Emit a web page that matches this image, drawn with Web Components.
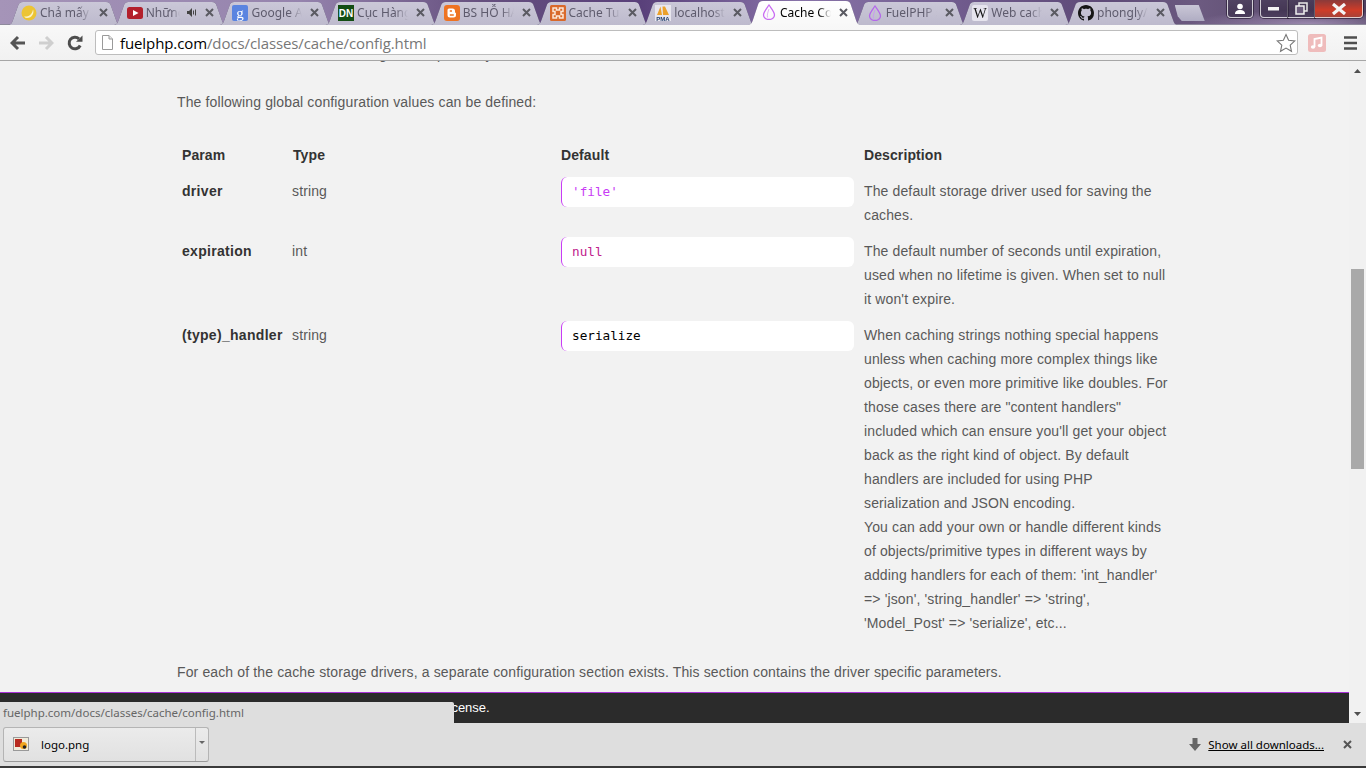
<!DOCTYPE html>
<html>
<head>
<meta charset="utf-8">
<title>Cache Config</title>
<style>
html,body{margin:0;padding:0;height:768px;overflow:hidden;background:#f2f2f2;}
body{display:flex;flex-direction:column;font-family:"Liberation Sans",Arial,sans-serif;}
svg{display:block;}
</style>
</head>
<body>

<chrome-tabstrip>
  <chrome-tab label="Chả mấy cái">
    <svg slot="icon" width="16" height="16" viewBox="0 0 16 16"><circle cx="8" cy="8" r="7.5" fill="#ecc435"/><path d="M3 11.5C7 12 11 10 12 4.500C13.500 8 11 13 6 13C5 13 4 12.500 3 11.500Z" fill="#fbf3c8"/></svg>
  </chrome-tab>
  <chrome-tab label="Những điều" audio>
    <svg slot="icon" width="16" height="16" viewBox="0 0 16 16"><rect y="2" width="16" height="12" rx="2.500" fill="#b3202c"/><path d="M6 5L11.500 8L6 11Z" fill="#fff"/></svg>
  </chrome-tab>
  <chrome-tab label="Google Analytics">
    <svg slot="icon" width="16" height="16" viewBox="0 0 16 16"><rect width="16" height="16" rx="2" fill="#5a84e0"/><text x="8" y="12.500" text-anchor="middle" font-family="Liberation Serif" font-size="15" fill="#fff">g</text></svg>
  </chrome-tab>
  <chrome-tab label="Cục Hàng hải">
    <svg slot="icon" width="16" height="16" viewBox="0 0 16 16"><rect width="16" height="16" fill="#134d13"/><text x="8" y="12" text-anchor="middle" font-family="Liberation Sans" font-weight="700" font-size="10" fill="#fff">DN</text></svg>
  </chrome-tab>
  <chrome-tab label="BS HỖ HẢI">
    <svg slot="icon" width="16" height="16" viewBox="0 0 16 16"><rect width="16" height="16" rx="3" fill="#ee7322"/><path d="M5 3.500H8.500A2.500 2.500 0 0 1 11 6V7A1 1 0 0 0 12 8V10A2.500 2.500 0 0 1 9.500 12.500H6A2.500 2.500 0 0 1 3.500 10V5A1.500 1.500 0 0 1 5 3.500Z" fill="#fff"/><path d="M5.800 6H8M5.800 10H9.800" stroke="#ee7322" stroke-width="1.300"/></svg>
  </chrome-tab>
  <chrome-tab label="Cache Tutorial">
    <svg slot="icon" width="16" height="16" viewBox="0 0 16 16"><rect width="16" height="16" rx="1.500" fill="#d9692b"/><path d="M3 3H6.500V5H9.500V3H13V6.500H11V9.500H13V13H9.500V11H6.500V13H3V9.500H5V6.500H3Z" fill="none" stroke="#fbe7d8" stroke-width="1.500"/></svg>
  </chrome-tab>
  <chrome-tab label="localhost:8080">
    <svg slot="icon" width="16" height="16" viewBox="0 0 16 16"><rect width="16" height="16" fill="#e8e6ee"/><path d="M2 10L5.500 1.500L7 10ZM8 10L7.500 1.500L10 1.500L14 10Z" fill="#eba12c"/><text x="8" y="15.500" text-anchor="middle" font-family="Liberation Sans" font-weight="700" font-size="6" fill="#24406f">PMA</text></svg>
  </chrome-tab>
  <chrome-tab label="Cache Config" active>
    <svg slot="icon" width="14" height="16" viewBox="0 0 14 16"><path d="M7 1C9 4 12.500 8 12.500 11A5.500 4.500 0 0 1 1.500 11C1.500 8 5 4 7 1Z" fill="none" stroke="#c96cf2" stroke-width="1.300"/><path d="M7 5C6 8 5 10 5.500 13.500" fill="none" stroke="#e3b3f8"/></svg>
  </chrome-tab>
  <chrome-tab label="FuelPHP » Docs">
    <svg slot="icon" width="14" height="16" viewBox="0 0 14 16"><path d="M7 1C9 4 12.500 8 12.500 11A5.500 4.500 0 0 1 1.500 11C1.500 8 5 4 7 1Z" fill="none" stroke="#b468ea" stroke-width="1.300"/><path d="M7 5C6 8 5 10 5.500 13.500" fill="none" stroke="#c99cef"/></svg>
  </chrome-tab>
  <chrome-tab label="Web cache - Wiki">
    <svg slot="icon" width="16" height="16" viewBox="0 0 16 16"><rect width="16" height="16" rx="2" fill="#e6e4ee"/><text x="8" y="13" text-anchor="middle" font-family="Liberation Serif" font-size="14" fill="#111">W</text></svg>
  </chrome-tab>
  <chrome-tab label="phongly/fuel">
    <svg slot="icon" width="16" height="16" viewBox="0 0 16 16"><path fill="#161616" d="M8 0C3.580 0 0 3.580 0 8c0 3.540 2.290 6.530 5.470 7.590.4.070.55-.17.55-.38 0-.19-.01-.82-.01-1.490-2.010.37-2.530-.49-2.690-.94-.09-.23-.48-.94-.82-1.130-.28-.15-.68-.52-.01-.53.630-.01 1.080.58 1.230.82.720 1.210 1.870.87 2.330.66.070-.52.280-.87.510-1.070-1.780-.2-3.640-.89-3.640-3.950 0-.87.310-1.590.82-2.150-.08-.2-.36-1.020.08-2.120 0 0 .67-.21 2.200.82.640-.18 1.320-.27 2-.27s1.360.09 2 .27c1.530-1.040 2.200-.82 2.200-.82.440 1.100.16 1.920.08 2.120.51.560.82 1.270.82 2.150 0 3.070-1.870 3.750-3.650 3.950.29.250.54.730.54 1.480 0 1.070-.01 1.930-.01 2.200 0 .21.150.46.550.38A8.010 8.010 0 0 0 16 8c0-4.420-3.580-8-8-8z"/></svg>
  </chrome-tab>
</chrome-tabstrip>

<chrome-toolbar url-host="fuelphp.com" url-path="/docs/classes/cache/config.html"></chrome-toolbar>

<main-area>
  <docs-page>
    <p class="cut">The class loads its defaults using the simple array.</p>
    <p>The following global configuration values can be defined:</p>
    <param-table>
      <param-row head>
        <span slot="name">Param</span><span slot="type">Type</span><span slot="def">Default</span><span slot="desc">Description</span>
      </param-row>
      <param-row>
        <span slot="name">driver</span><span slot="type">string</span>
        <code-box slot="def" style="--code:#c83cf5">'file'</code-box>
        <span slot="desc">The default storage driver used for saving the caches.</span>
      </param-row>
      <param-row>
        <span slot="name">expiration</span><span slot="type">int</span>
        <code-box slot="def" style="--code:#c0218c">null</code-box>
        <span slot="desc">The default number of seconds until expiration, used when no lifetime is given. When set to null it won't expire.</span>
      </param-row>
      <param-row>
        <span slot="name">(type)_handler</span><span slot="type">string</span>
        <code-box slot="def" style="--code:#000">serialize</code-box>
        <span slot="desc">When caching strings nothing special happens unless when caching more complex things like objects, or even more primitive like doubles. For those cases there are "content handlers" included which can ensure you'll get your object back as the right kind of object. By default handlers are included for using PHP serialization and JSON encoding.<br>You can add your own or handle different kinds of objects/primitive types in different ways by adding handlers for each of them: 'int_handler' =&gt; 'json', 'string_handler' =&gt; 'string', 'Model_Post' =&gt; 'serialize', etc...</span>
      </param-row>
    </param-table>
    <p class="after">For each of the cache storage drivers, a separate configuration section exists. This section contains the driver specific parameters.</p>
  </docs-page>
  <page-scrollbar></page-scrollbar>
  <page-footer>© FuelPHP Development Team 2010 - FuelPHP is released under the MIT license.</page-footer>
  <status-bubble>fuelphp.com/docs/classes/cache/config.html</status-bubble>
</main-area>

<download-bar file="logo.png"></download-bar>

<script>
//tab strip with the window buttons on the right
class ChromeTabstrip extends HTMLElement{
  constructor(){
    super();
    this.attachShadow({mode:'open'}).innerHTML = `
    <style>
      :host{
        display:flex;
        flex:none;
        height:25px;
        padding-left:7px;
        box-sizing:border-box;
        overflow:hidden;
        background:
          linear-gradient(transparent 24px,#8e8a9c 24px),
          radial-gradient(ellipse 120px 14px at 1310px 24px, rgba(190,170,210,.65), transparent),
          linear-gradient(90deg,#a594b8 0,#9583ad 300px,#66507f 480px,#59407a 640px,#8873a8 800px,#6a5586 1000px,#5e4a78 1100px,#6c5a80 1200px,#4f4060 1366px);
      }
      .tabs{display:flex;align-items:flex-end;height:25px;}
      .newtab{flex:none;width:30px;height:16px;margin:5px 0 0 5px;background:linear-gradient(#c9c6d6,#b0adc3);clip-path:polygon(0 0,24px 0,30px 100%,7px 100%,3px 70%);}
      .ctl{position:relative;display:flex;height:18px;margin-left:auto;margin-right:3px;flex:none;gap:7px;}
      .btn{box-sizing:border-box;height:18px;border:1px solid rgba(255,255,255,.75);border-top:0;border-radius:0 0 4px 4px;display:flex;align-items:center;justify-content:center;background:linear-gradient(rgba(60,50,75,.5),rgba(40,30,55,.55));box-shadow:0 0 0 1px rgba(30,20,40,.6);}
      .wbtns{display:flex;}
      .wbtns .btn{border-radius:0;border-left:0;}
      .wbtns .btn:first-child{border-left:1px solid rgba(255,255,255,.75);border-radius:0 0 0 4px;}
      .wbtns .btn:last-child{border-radius:0 0 4px 0;background:linear-gradient(#8a3a3a,#cf3c28 60%,#a84238);}
    </style>
    <div class="tabs"><slot></slot></div>
    <div class="newtab"></div>
    <div class="ctl">
      <div class="btn" style="width:26px">
        <svg width="12" height="12" viewBox="0 0 12 12"><circle cx="6" cy="3.500" r="2.800" fill="#fff"/><path d="M1 11C1 8 3 7 6 7S11 8 11 11Z" fill="#fff"/></svg>
      </div>
      <div class="wbtns">
        <div class="btn" style="width:28px"><svg width="12" height="5" viewBox="0 0 12 5"><rect y="1" width="11" height="3.500" fill="#f4f4f4"/></svg></div>
        <div class="btn" style="width:27px"><svg width="13" height="13" viewBox="0 0 13 13"><rect x="4" y="1" width="8" height="8" fill="none" stroke="#e8e8e8" stroke-width="1.500"/><rect x="1" y="4" width="8" height="8" fill="#6b5b7c" stroke="#f0f0f0" stroke-width="1.500"/></svg></div>
        <div class="btn" style="width:48px"><svg width="16" height="12" viewBox="0 0 16 12"><path d="M2 1L14 11M14 1L2 11" stroke="#f4f4f4" stroke-width="3.200"/></svg></div>
      </div>
    </div>`;
  }
}

//one tab, slanted by clip-path, outline comes from the host filter
class ChromeTab extends HTMLElement{
  constructor(){
    super();
    this.attachShadow({mode:'open'}).innerHTML = `
    <style>
      :host{
        display:block;
        flex:none;
        width:115px;
        height:24px;
        margin-right:-9.3px;
        filter:drop-shadow(0 0 .6px rgba(50,40,70,.8));
      }
      :host([active]){position:relative;z-index:2;height:25px;filter:drop-shadow(0 0 .5px rgba(50,40,70,.5));}
      .shape{
        box-sizing:border-box;
        height:100%;
        display:flex;
        align-items:center;
        padding:0 14px 1px 14px;
        background:linear-gradient(#cbc8d8,#bdbacd);
        clip-path:path('M0 24C4 24 5 22 6 19L11 5C12 2 13 1 16 1L99 1C102 1 103 2 104 5L109 19C110 22 111 24 115 24Z');
        font:12px "Noto Sans","Open Sans",sans-serif;
        color:#5e5b6d;
      }
      :host([active]) .shape{
        background:linear-gradient(#fff,#f8f8f8);
        color:#000;
        clip-path:path('M0 25C4 25 5 23 6 20L11 5C12 2 13 1 16 1L99 1C102 1 103 2 104 5L109 20C110 23 111 25 115 25Z');
      }
      .ico{flex:none;width:16px;height:16px;margin-right:3px;display:flex;justify-content:center;}
      .title{flex:1;min-width:0;white-space:nowrap;overflow:hidden;-webkit-mask-image:linear-gradient(90deg,#000 75%,transparent);mask-image:linear-gradient(90deg,#000 75%,transparent);}
      .audio{flex:none;margin-left:7px;display:none;}
      :host([audio]) .audio{display:block;}
      .close{flex:none;margin-left:8px;}
    </style>
    <div class="shape">
      <span class="ico"><slot name="icon"></slot></span>
      <span class="title"></span>
      <svg class="audio" width="10" height="11" viewBox="0 0 10 11"><path d="M0 4H2L5 1V10L2 7H0Z" fill="#444"/><path d="M6.500 3.500V7.500M8.500 2.500V8.500" stroke="#444"/></svg>
      <svg class="close" width="9" height="9" viewBox="0 0 9 9"><path d="M1 1L8 8M8 1L1 8" stroke="#5a5a62" stroke-width="2"/></svg>
    </div>`;
  }
  connectedCallback(){
    this.shadowRoot.querySelector('.title').textContent = this.getAttribute('label');
  }
}

//back, forward, reload, omnibox and the menu
class ChromeToolbar extends HTMLElement{
  constructor(){
    super();
    this.attachShadow({mode:'open'}).innerHTML = `
    <style>
      :host{
        display:flex;
        flex:none;
        align-items:center;
        height:36px;
        box-sizing:border-box;
        padding:0 9px 0 10px;
        background:linear-gradient(#f8f8f8,#f1f1f1);
        border-bottom:1px solid #a6a6a6;
      }
      .nav{flex:none;width:16px;height:16px;}
      .omni{
        flex:1;
        display:flex;
        align-items:center;
        height:25px;
        margin:0 10px 0 12px;
        box-sizing:border-box;
        padding:0 1px 0 6px;
        background:#fff;
        border:1px solid #bdbdbd;
        border-radius:3px;
        font:15px "Open Sans","Noto Sans",sans-serif;
        letter-spacing:-.1px;
        color:#777;
        white-space:nowrap;
      }
      .omni b{font-weight:400;color:#000;}
      .url{flex:1;margin-left:7px;}
    </style>
    <svg class="nav" viewBox="0 0 16 16"><path d="M8 2L2 8L8 14M2.500 8H15" fill="none" stroke="#555" stroke-width="3"/></svg>
    <svg class="nav" style="margin-left:12px" viewBox="0 0 16 16"><path d="M8 2L14 8L8 14M13.500 8H1" fill="none" stroke="#cfcfcf" stroke-width="3"/></svg>
    <svg class="nav" style="margin-left:13px" viewBox="0 0 16 16"><path d="M13.200 10.500A5.800 5.800 0 1 1 12 3.800" fill="none" stroke="#4d4d4d" stroke-width="3"/><path d="M9 6.800H15.500V0.500Z" fill="#4d4d4d"/></svg>
    <div class="omni">
      <svg width="11" height="15" viewBox="0 0 11 15"><path d="M.5.500H7L10.500 4V14.500H.5Z" fill="#fff" stroke="#9a9a9a"/><path d="M7 .5V4H10.500" fill="#e8e8e8" stroke="#9a9a9a"/></svg>
      <span class="url"><b></b><span class="path"></span></span>
      <svg width="20" height="20" viewBox="0 0 20 20"><path d="M10 1.500L12.600 7.300L18.800 7.900L14.200 12.100L15.500 18.300L10 15.100L4.500 18.300L5.800 12.100L1.200 7.900L7.400 7.300Z" fill="#fff" stroke="#777" stroke-width="1.100"/></svg>
    </div>
    <svg width="18" height="18" viewBox="0 0 18 18"><rect width="18" height="18" rx="2.500" fill="#efbcbc"/><path d="M6.500 13V5L13.500 3.500V11.500" fill="none" stroke="#fff" stroke-width="1.800"/><ellipse cx="5" cy="13" rx="2.200" ry="1.800" fill="#fff"/><ellipse cx="12" cy="11.500" rx="2.200" ry="1.800" fill="#fff"/></svg>
    <svg style="margin-left:18px" width="13" height="14" viewBox="0 0 13 14"><path d="M0 1.500H13M0 7H13M0 12.500H13" stroke="#4f4f4f" stroke-width="2.600"/></svg>`;
  }
  connectedCallback(){
    this.shadowRoot.querySelector('b').textContent = this.getAttribute('url-host');
    this.shadowRoot.querySelector('.path').textContent = this.getAttribute('url-path');
  }
}

//everything between toolbar and download bar
class MainArea extends HTMLElement{
  constructor(){
    super();
    this.attachShadow({mode:'open'}).innerHTML = `
    <style>
      :host{display:flex;flex:1;min-height:0;position:relative;overflow:hidden;background:#f2f2f2;}
    </style>
    <slot></slot>`;
  }
}

//page text, already scrolled a bit
class DocsPage extends HTMLElement{
  constructor(){
    super();
    this.attachShadow({mode:'open'}).innerHTML = `
    <style>
      :host{
        display:block;
        flex:1;
        min-width:0;
        box-sizing:border-box;
        margin-top:-19px;
        padding-left:177px;
        font:14px/24px "Liberation Sans",Arial,sans-serif;
        letter-spacing:.13px;
        color:#595959;
      }
      ::slotted(p){margin:0 0 24px;}
      ::slotted(p.cut){margin-bottom:24px;}
      ::slotted(p.after){margin:25px 0 0;}
    </style>
    <slot></slot>`;
  }
}

class ParamTable extends HTMLElement{
  constructor(){
    super();
    this.attachShadow({mode:'open'}).innerHTML = `
    <style>
      :host{display:flex;flex-direction:column;gap:12px;width:998px;margin-top:29px;}
    </style>
    <slot></slot>`;
  }
}

class ParamRow extends HTMLElement{
  constructor(){
    super();
    this.attachShadow({mode:'open'}).innerHTML = `
    <style>
      :host{display:grid;grid-template-columns:110px 269px 303px 316px;}
      .cell{padding:0 5px;}
      .name{font-weight:700;color:#333;white-space:nowrap;letter-spacing:.3px;}
      :host([head]) .cell{font-weight:700;color:#333;letter-spacing:.1px;}
      :host([head]) .type{padding-left:6px;}
    </style>
    <div class="cell name"><slot name="name"></slot></div>
    <div class="cell type"><slot name="type"></slot></div>
    <div class="cell"><slot name="def"></slot></div>
    <div class="cell"><slot name="desc"></slot></div>`;
  }
}

class CodeBox extends HTMLElement{
  constructor(){
    super();
    this.attachShadow({mode:'open'}).innerHTML = `
    <style>
      :host{
        display:block;
        box-sizing:border-box;
        height:30px;
        margin-top:-2px;
        padding-left:10px;
        background:#fff;
        border-left:1px solid #c83cf5;
        border-radius:6px;
        font:12.700px/30px "DejaVu Sans Mono",monospace;
        letter-spacing:0;
        color:var(--code,#000);
      }
    </style>
    <slot></slot>`;
  }
}

class PageScrollbar extends HTMLElement{
  constructor(){
    super();
    this.attachShadow({mode:'open'}).innerHTML = `
    <style>
      :host{display:flex;flex:none;flex-direction:column;align-items:center;width:17px;height:100%;background:#f1f1f1;position:relative;z-index:3;}
      .thumb{width:13px;height:200px;margin-top:196px;background:#a9a9a9;}
      .up{margin-top:8px;}
      .down{margin-top:auto;margin-bottom:7px;}
    </style>
    <svg class="up" width="7" height="4" viewBox="0 0 7 4"><path d="M3.500 0L7 4H0Z" fill="#505050"/></svg>
    <div class="thumb"></div>
    <svg class="down" width="7" height="4" viewBox="0 0 7 4"><path d="M0 0H7L3.500 4Z" fill="#505050"/></svg>`;
  }
}

//sticky footer of the docs, sits over the page
class PageFooter extends HTMLElement{
  constructor(){
    super();
    this.attachShadow({mode:'open'}).innerHTML = `
    <style>
      :host{
        position:absolute;
        left:0;
        right:17px;
        bottom:0;
        height:31px;
        box-sizing:border-box;
        border-top:1px solid #a932d8;
        background:#2b2b2b;
        color:#fff;
        font:13px/29px "Liberation Sans",Arial,sans-serif;
        padding-left:15px;
        white-space:nowrap;
      }
    </style>
    <slot></slot>`;
  }
}

class StatusBubble extends HTMLElement{
  constructor(){
    super();
    this.attachShadow({mode:'open'}).innerHTML = `
    <style>
      :host{
        position:absolute;
        left:0;
        bottom:0;
        width:454px;
        height:21px;
        box-sizing:border-box;
        padding-left:3px;
        background:#dedede;
        border-radius:0 2px 0 0;
        color:#666;
        font:11.500px/22px "Noto Sans","Open Sans",sans-serif;
        z-index:2;
      }
    </style>
    <slot></slot>`;
  }
}

class DownloadBar extends HTMLElement{
  constructor(){
    super();
    this.attachShadow({mode:'open'}).innerHTML = `
    <style>
      :host{
        display:flex;
        flex:none;
        align-items:center;
        height:45px;
        box-sizing:border-box;
        padding:0 14px 1px 3px;
        background:#dedede;
        border-bottom:2px solid #3a3a3a;
        font:11.500px "Noto Sans","Open Sans",sans-serif;
        color:#000;
      }
      .item{
        display:flex;
        align-items:center;
        box-sizing:border-box;
        width:206px;
        height:35px;
        border:1px solid #b4b4b4;
        border-bottom-color:#999;
        border-radius:3px;
        background:linear-gradient(#ebebeb,#e1e1e1);
      }
      .file{flex:1;display:flex;align-items:center;padding-left:9px;gap:12px;}
      .more{width:13px;height:100%;border-left:1px solid #bbb;display:flex;align-items:center;justify-content:center;padding-bottom:4px;box-sizing:border-box;}
      .all{margin-left:auto;display:flex;align-items:center;gap:7px;}
      a{color:#000;text-decoration:underline;}
      .x{margin-left:19px;}
    </style>
    <div class="item">
      <div class="file">
        <svg width="16" height="14" viewBox="0 0 16 14"><rect x=".5" y=".5" width="15" height="13" fill="#f0ead8" stroke="#999"/><rect x="2" y="2" width="7" height="8" fill="#b82a1e"/><circle cx="10.500" cy="8.500" r="3.500" fill="#efa51f"/><circle cx="11.500" cy="10" r="1.800" fill="#222"/></svg>
        <span class="name"></span>
      </div>
      <div class="more"><svg width="6" height="3" viewBox="0 0 6 3"><path d="M0 0H6L3 3Z" fill="#666"/></svg></div>
    </div>
    <div class="all">
      <svg width="12" height="13" viewBox="0 0 12 13"><path d="M3.500 0H8.500V6H12L6 13L0 6H3.500Z" fill="#666"/></svg>
      <a>Show all downloads...</a>
    </div>
    <svg class="x" width="9" height="9" viewBox="0 0 9 9"><path d="M1 1L8 8M8 1L1 8" stroke="#555" stroke-width="2"/></svg>`;
  }
  connectedCallback(){
    this.shadowRoot.querySelector('.name').textContent = this.getAttribute('file');
  }
}

customElements.define('chrome-tabstrip', ChromeTabstrip);
customElements.define('chrome-tab', ChromeTab);
customElements.define('chrome-toolbar', ChromeToolbar);
customElements.define('main-area', MainArea);
customElements.define('docs-page', DocsPage);
customElements.define('param-table', ParamTable);
customElements.define('param-row', ParamRow);
customElements.define('code-box', CodeBox);
customElements.define('page-scrollbar', PageScrollbar);
customElements.define('page-footer', PageFooter);
customElements.define('status-bubble', StatusBubble);
customElements.define('download-bar', DownloadBar);
</script>
</body>
</html>
